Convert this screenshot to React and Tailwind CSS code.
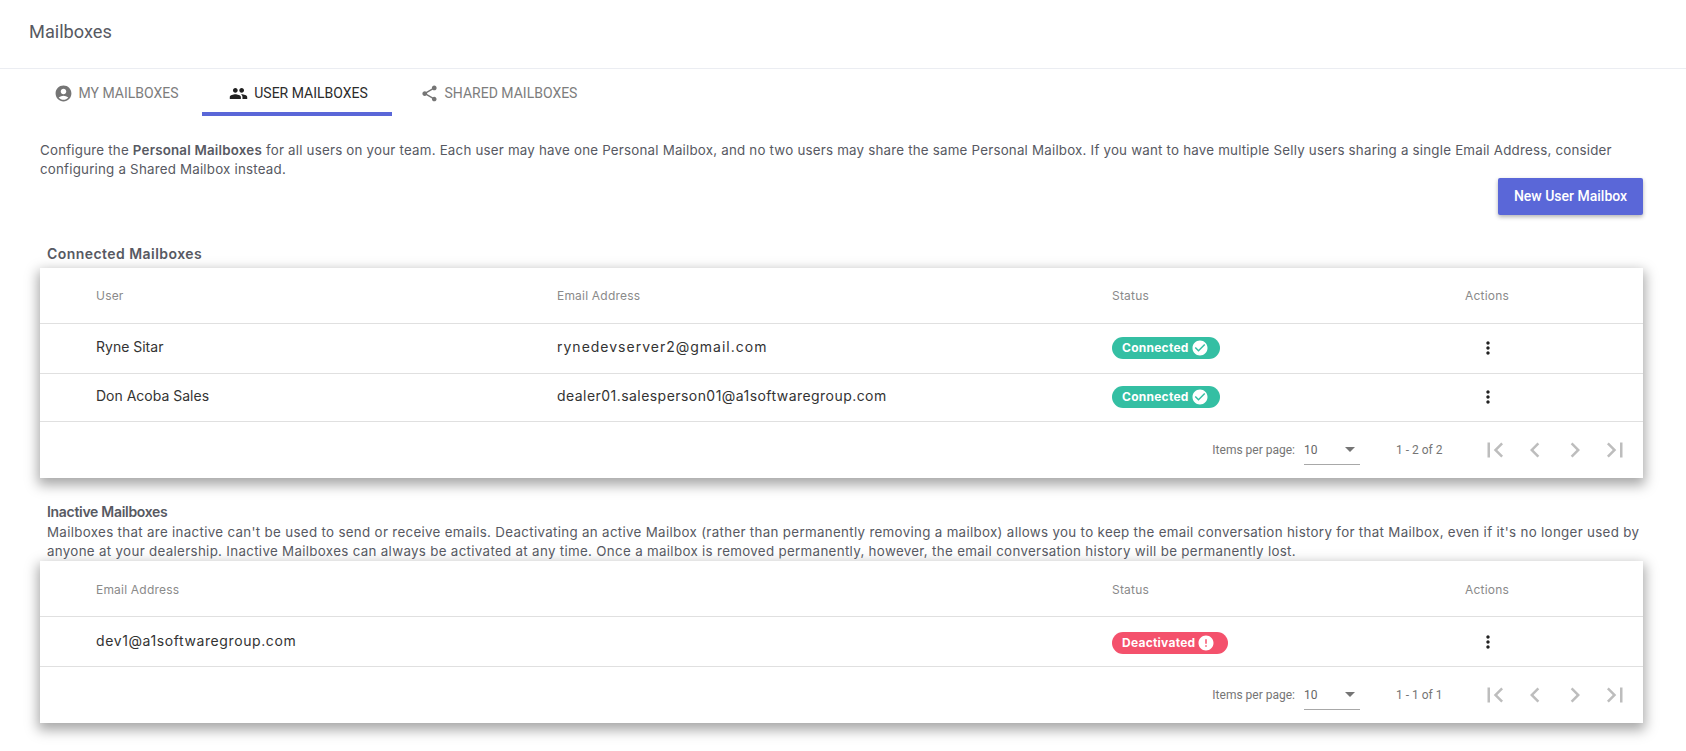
import React from "react";
import { MdAccountCircle, MdPeople, MdShare, MdMoreVert, MdFirstPage, MdLastPage, MdChevronLeft, MdChevronRight, MdCheckCircle, MdError } from "react-icons/md";

const body = "font-['Inter','Open_Sans',sans-serif]";
const roboto = "font-['Roboto',sans-serif]";

function Tab({ icon: Icon, label, active, w }) {
  return (
    <div className={`${w} h-[47px] flex items-center justify-center gap-[6px] pl-[3px] pt-[6px] border-b-4 ${active ? "border-[#5a67d8] text-[#2b2b2b]" : "border-transparent text-[#7d7d7d]"} ${roboto} text-[14px]`}>
      <Icon className={`text-[19px] ${active ? "text-[#222]" : "text-[#757575]"}`} />
      <span>{label}</span>
    </div>
  );
}

function Badge({ kind }) {
  const ok = kind === "ok";
  return (
    <span className={`inline-flex items-center gap-[2px] h-[22px] pl-[10px] pr-[3px] rounded-full text-white font-bold text-[12px] ${ok ? "bg-[#34bfa3] w-[108px]" : "bg-[#f4516c] w-[116px]"}`}>
      <span className="tracking-[0.25px] whitespace-nowrap">{ok ? "Connected" : "Deactivated"}</span>
      {ok ? <MdCheckCircle className="text-[18px] shrink-0" /> : <MdError className="text-[18px] shrink-0" />}
    </span>
  );
}

function Paginator({ range }) {
  return (
    <div className={`h-[56px] flex items-center justify-end pr-[8px] ${roboto} text-[12px] text-[#757575]`}>
      <span>Items per page:</span>
      <div className="ml-[9px] w-[56px] h-[29px] border-b border-[#a8a8a8] flex items-center justify-between pr-[3px] text-[12px] text-[#666]">
        <span>10</span>
        <span className="w-0 h-0 border-l-[5px] border-r-[5px] border-t-[5px] border-l-transparent border-r-transparent border-t-[#757575] mr-[2px]" />
      </div>
      <span className="ml-[36px] w-[78px]">{range}</span>
      <div className="flex items-center ml-[1px] text-[#bdbdbd]">
        <MdFirstPage className="text-[30px] w-[40px]" />
        <MdChevronLeft className="text-[30px] w-[40px]" />
        <MdChevronRight className="text-[30px] w-[40px]" />
        <MdLastPage className="text-[30px] w-[40px]" />
      </div>
    </div>
  );
}

function Row({ children, cols, h }) {
  return <div className={`grid ${cols} pl-[56px] ${h} items-center border-b border-[#e0e0e0]`}>{children}</div>;
}

function Actions() {
  return <MdMoreVert className="text-[20px] text-[#222] ml-[14px]" />;
}

const head = "text-[12px] text-[#8a8a8a] tracking-[0.2px]";
const cell = "text-[14px] text-[#333] mb-[2px]";
const cols1 = "grid-cols-[461px_555px_352px_1fr]";
const cols2 = "grid-cols-[1016px_352px_1fr]";

export default function App() {
  return (
    <div className={`w-[1686px] h-[751px] overflow-hidden bg-white ${body}`}>
      <div className="h-[69px] border-b border-[#ebedf2] flex items-center pl-[29px] pb-[4px]">
        <h1 className={`${roboto} text-[18.2px] text-[#575962]`}>Mailboxes</h1>
      </div>
      <div className="flex pl-[27px]">
        <Tab icon={MdAccountCircle} label="MY MAILBOXES" w="w-[175px]" />
        <Tab icon={MdPeople} label="USER MAILBOXES" w="w-[190px]" active />
        <Tab icon={MdShare} label="SHARED MAILBOXES" w="w-[210px]" />
      </div>
      <div className="px-[40px] pt-[25px]">
        <p className="text-[13.33px] leading-[19px] text-[#575962] tracking-[0.21px]">
          Configure the <b className="font-semibold">Personal Mailboxes</b> for all users on your team. Each user may have one Personal Mailbox, and no two users may share the same Personal Mailbox. If you want to have multiple Selly users sharing a single Email Address, consider configuring a Shared Mailbox instead.
        </p>
        <div className="flex justify-end mt-[-1px] pr-[3px]">
          <button className={`w-[145px] h-[37px] rounded-[2px] bg-[#5a67d8] text-white text-[14px] font-medium ${roboto} shadow-[0_2px_4px_rgba(0,0,0,0.3)]`}>New User Mailbox</button>
        </div>
        <h2 className="mt-[31px] ml-[7px] h-[16px] leading-[16px] text-[14px] font-semibold tracking-[0.45px] text-[#575962]">Connected Mailboxes</h2>
        <div className="mt-[6px] mr-[3px] bg-white shadow-[0_5px_12px_2px_rgba(0,0,0,0.35)]">
          <Row cols={cols1} h="h-[56px]">
            <span className={head}>User</span><span className={head}>Email Address</span><span className={head}>Status</span><span className={`${head} ml-[1px]`}>Actions</span>
          </Row>
          <Row cols={cols1} h="h-[50px] pb-[2px]">
            <span className={cell}>Ryne Sitar</span><span className={`${cell} text-[14.5px] tracking-[1px]`}>rynedevserver2@gmail.com</span><span className="mb-[2px]"><Badge kind="ok" /></span><Actions />
          </Row>
          <Row cols={cols1} h="h-[48px] pb-[2px]">
            <span className={cell}>Don Acoba Sales</span><span className={`${cell} tracking-[0.45px]`}>dealer01.salesperson01@a1softwaregroup.com</span><span className="mb-[2px]"><Badge kind="ok" /></span><Actions />
          </Row>
          <Paginator range="1 - 2 of 2" />
        </div>
        <h2 className="mt-[26px] ml-[7px] h-[16px] leading-[16px] text-[14px] font-semibold tracking-[-0.3px] text-[#575962]">Inactive Mailboxes</h2>
        <p className="ml-[7px] mt-[3px] text-[13.33px] leading-[19px] text-[#575962] tracking-[0.32px]">
          Mailboxes that are inactive can't be used to send or receive emails. Deactivating an active Mailbox (rather than permanently removing a mailbox) allows you to keep the email conversation history for that Mailbox, even if it's no longer used by anyone at your dealership. Inactive Mailboxes can always be activated at any time. Once a mailbox is removed permanently, however, the email conversation history will be permanently lost.
        </p>
        <div className="mr-[3px] bg-white shadow-[0_5px_12px_2px_rgba(0,0,0,0.35)]">
          <Row cols={cols2} h="h-[56px] pt-[2px]">
            <span className={head}>Email Address</span><span className={head}>Status</span><span className={`${head} ml-[1px]`}>Actions</span>
          </Row>
          <Row cols={cols2} h="h-[50px]">
            <span className={`${cell} tracking-[0.6px]`}>dev1@a1softwaregroup.com</span><span><Badge kind="err" /></span><Actions />
          </Row>
          <Paginator range="1 - 1 of 1" />
        </div>
      </div>
    </div>
  );
}
